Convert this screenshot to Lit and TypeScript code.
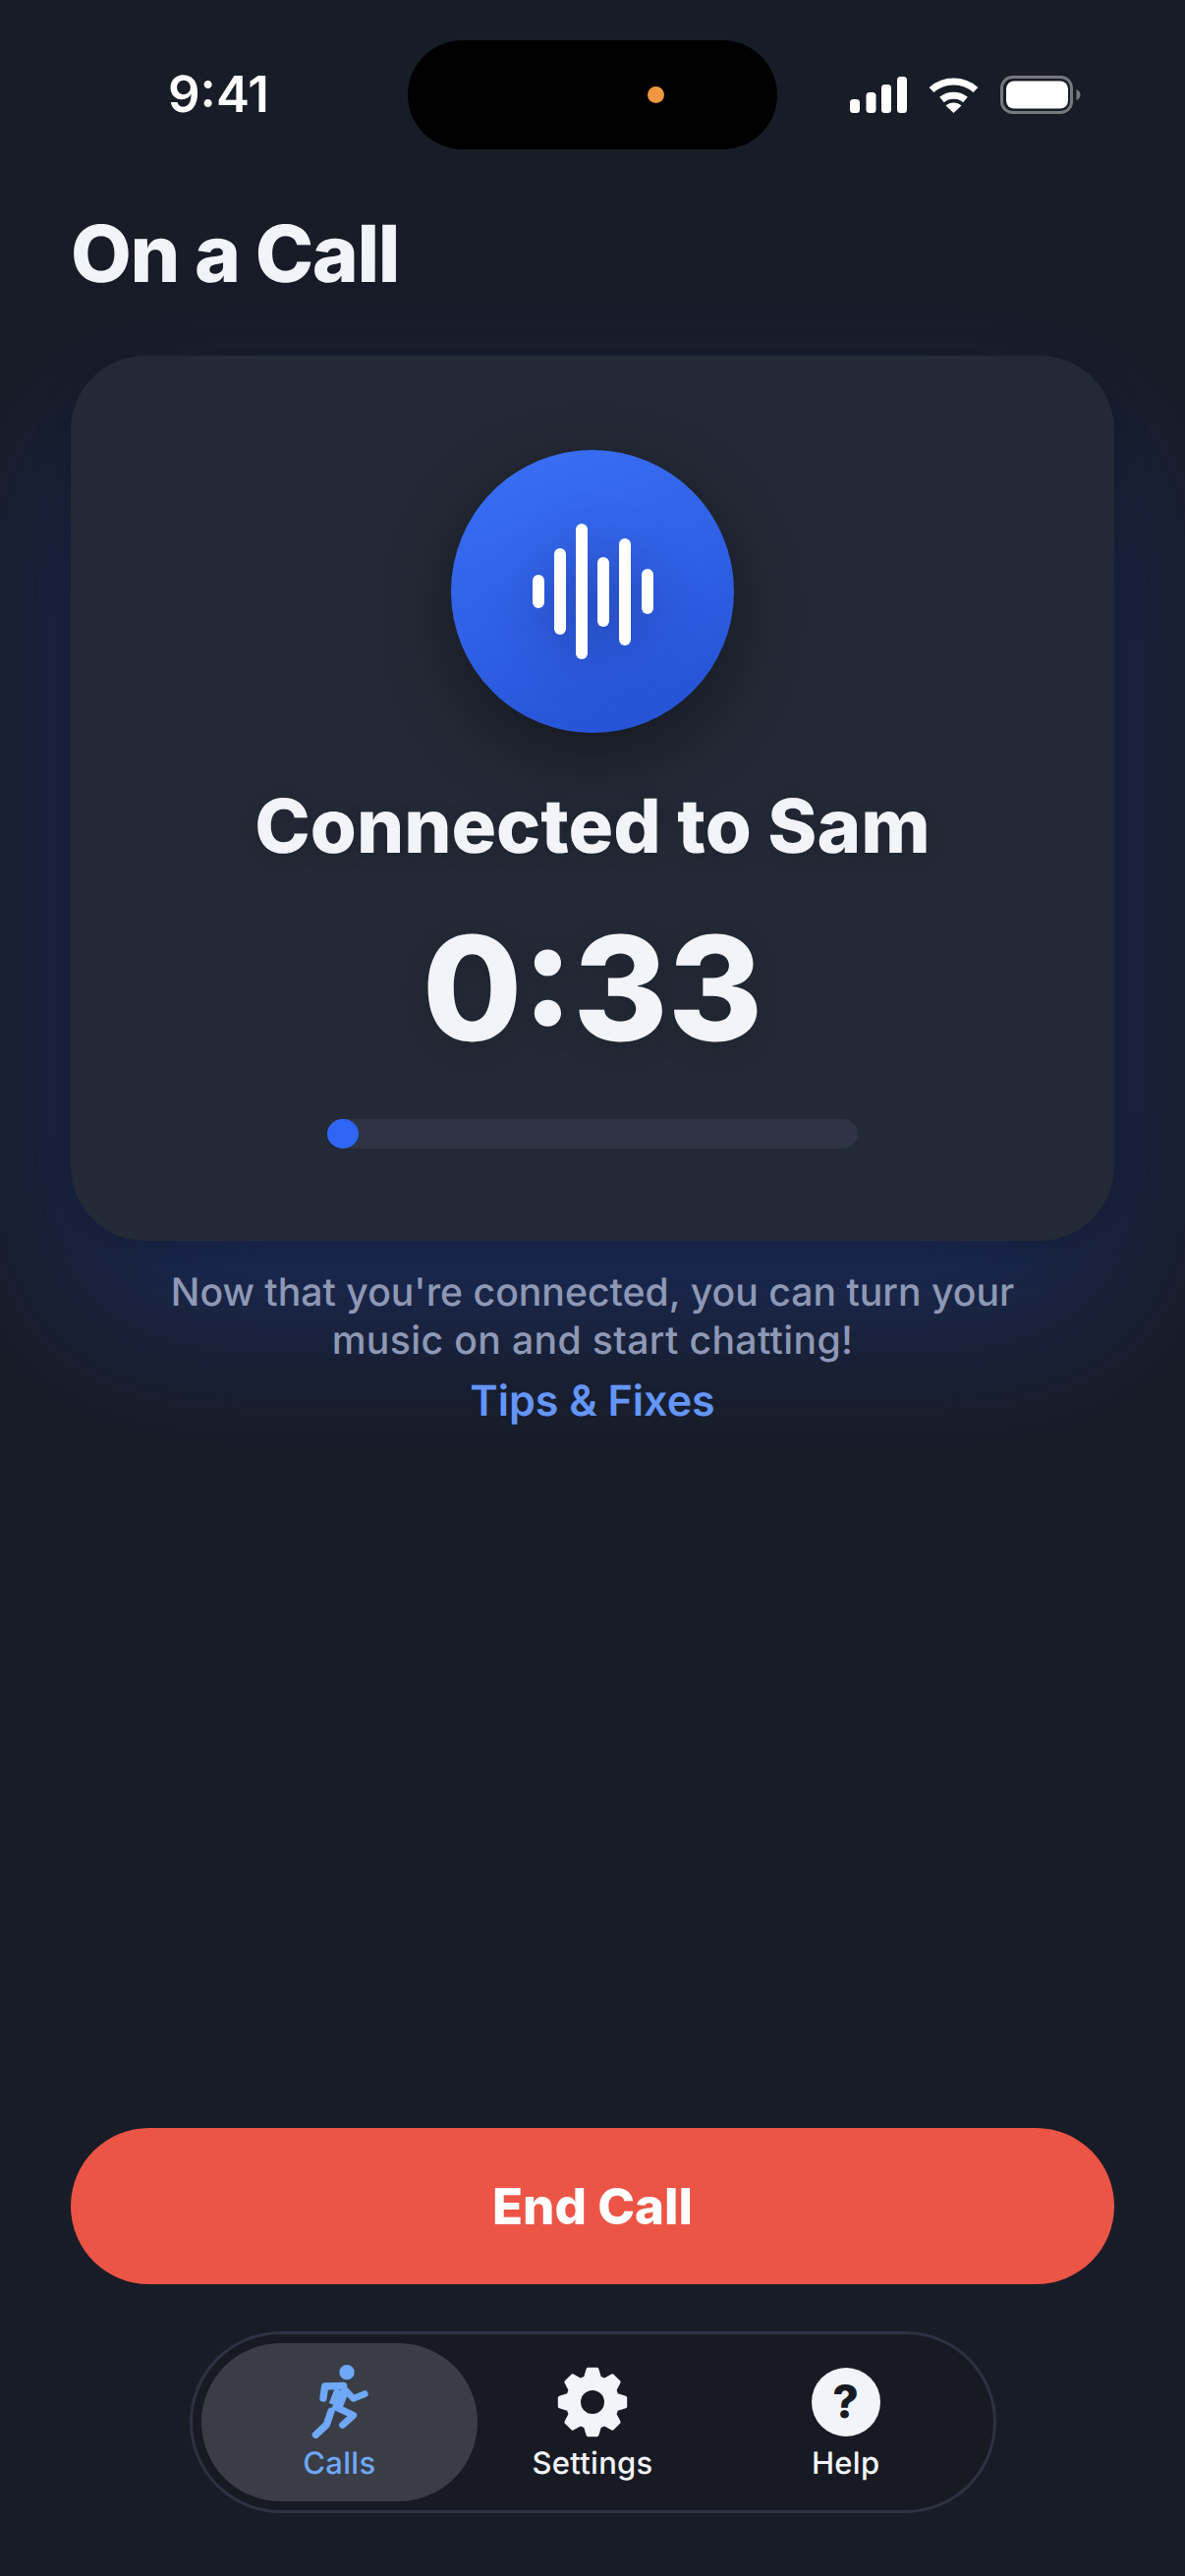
import { LitElement, html, css, svg } from 'lit';
import { customElement, state } from 'lit/decorators.js';

// 8-tooth gear, centered on 0,0
function gearPath(teeth: number, outer: number, inner: number, hole: number) {
  const pts: string[] = [];
  const step = (Math.PI * 2) / teeth;
  for (let i = 0; i < teeth; i++) {
    const a = i * step - Math.PI / 2;
    const corners: [number, number][] = [
      [a - step * 0.36, inner],
      [a - step * 0.17, outer],
      [a + step * 0.17, outer],
      [a + step * 0.36, inner],
    ];
    for (const [ang, r] of corners) {
      pts.push(`${(Math.cos(ang) * r).toFixed(2)} ${(Math.sin(ang) * r).toFixed(2)}`);
    }
  }
  const ring = `M${pts.join('L')}Z`;
  const circle = `M${hole} 0A${hole} ${hole} 0 1 0 ${-hole} 0A${hole} ${hole} 0 1 0 ${hole} 0Z`;
  return ring + circle;
}

const BARS = [
  { x: 542, top: 585, bottom: 619 },
  { x: 564, top: 558, bottom: 646 },
  { x: 586, top: 533, bottom: 671 },
  { x: 608, top: 567, bottom: 638 },
  { x: 630, top: 548, bottom: 657 },
  { x: 653, top: 579, bottom: 625 },
];

@customElement('app-root')
export class AppRoot extends LitElement {
  @state()
  tab = 'calls';

  renderSignal() {
    return html`<svg class="signal" width="58" height="37" viewBox="0 0 58 37">
      <rect x="0" y="23" width="10" height="14" rx="3.5" fill="#fff"></rect>
      <rect x="16.5" y="16" width="10" height="21" rx="3.5" fill="#fff"></rect>
      <rect x="32" y="8" width="10" height="29" rx="3.5" fill="#fff"></rect>
      <rect x="48" y="0" width="10" height="37" rx="3.5" fill="#fff"></rect>
    </svg>`;
  }

  renderWifi() {
    return html`<svg class="wifi" width="51" height="37" viewBox="0 0 51 37">
      <path d="M3 13.5C15.5 2 35.5 2 48 13.5" fill="none" stroke="#fff" stroke-width="7"></path>
      <path d="M13.5 23.5C20 17.8 31 17.8 37.5 23.5" fill="none" stroke="#fff" stroke-width="7"></path>
      <path d="M17.5 29.5C22 25.6 29 25.6 33.5 29.5L25.5 37Z" fill="#fff"></path>
    </svg>`;
  }

  renderBattery() {
    return html`<svg class="battery" width="82" height="39" viewBox="0 0 82 39">
      <rect x="1.5" y="1.5" width="71" height="36" rx="11" fill="none" stroke="#77787d" stroke-width="3"></rect>
      <rect x="6" y="5.5" width="63" height="28" rx="8" fill="#fff"></rect>
      <path d="M77.5 14C80 15 81.5 17 81.5 19.5C81.5 22 80 24 77.5 25Z" fill="#77787d"></path>
    </svg>`;
  }

  renderWave() {
    return html`<svg class="wave" width="123" height="138" viewBox="542 533 123 138">
      ${BARS.map(
        (b) => svg`<rect x=${b.x} y=${b.top} width="12" height=${b.bottom - b.top} rx="6" fill="#fff"></rect>`,
      )}
    </svg>`;
  }

  renderRunner() {
    return html`<svg class="icon runner" width="60" height="78" viewBox="410 140 180 234">
      <circle cx="518" cy="166" r="23" fill="#6fa8f7"></circle>
      <g fill="none" stroke="#6fa8f7" stroke-linecap="round" stroke-linejoin="round">
        <path d="M446 245L451 209L508 207" stroke-width="22"></path>
        <path d="M508 215L538 246L573 232" stroke-width="20"></path>
        <path d="M502 222L484 268" stroke-width="44" stroke-linecap="butt"></path>
        <path d="M484 272L538 297L505 327" stroke-width="21"></path>
        <path d="M470 285L456 326L423 357" stroke-width="22"></path>
      </g>
    </svg>`;
  }

  renderGear() {
    return html`<svg class="icon" width="78" height="78" viewBox="-39 -39 78 78">
      <path d=${gearPath(8, 33.5, 25.5, 12)} fill="#f2f4f9" fill-rule="evenodd"
        stroke="#f2f4f9" stroke-width="4" stroke-linejoin="round"></path>
      <circle r="12" fill="#171a23"></circle>
    </svg>`;
  }

  render() {
    return html`
      <div class="status">
        <span class="clock">9:41</span>
        <div class="island"><span class="dot"></span></div>
        <div class="indicators">
          ${this.renderSignal()} ${this.renderWifi()} ${this.renderBattery()}
        </div>
      </div>

      <main>
        <h1>On a Call</h1>

        <section class="card">
          <div class="avatar">${this.renderWave()}</div>
          <h2>Connected to Sam</h2>
          <div class="timer">0:33</div>
          <div class="track"><div class="fill"></div></div>
        </section>

        <p class="note">
          Now that you're connected, you can turn your<br />
          <span class="second">music on and start chatting!</span>
        </p>
        <a class="link">Tips &amp; Fixes</a>

        <div class="spacer"></div>

        <button class="end">End Call</button>
      </main>

      <nav>
        <div class="item active">${this.renderRunner()}<span>Calls</span></div>
        <div class="item">${this.renderGear()}<span>Settings</span></div>
        <div class="item">
          <div class="help"><span>?</span></div>
          <span>Help</span>
        </div>
      </nav>
    `;
  }

  static styles = css`
    :host {
      display: flex;
      flex-direction: column;
      width: 1206px;
      height: 2622px;
      overflow: hidden;
      background: #181c27;
      font-family: Inter, 'Liberation Sans', sans-serif;
      text-rendering: geometricPrecision;
      color: #f2f4f9;
    }

    .status {
      display: grid;
      grid-template-columns: 415px 376px 1fr;
      align-items: center;
      height: 111px;
      margin-top: 41px;
    }

    .clock {
      justify-self: start;
      margin-left: 171px;
      font-size: 51px;
      font-weight: 600;
      line-height: 60px;
      color: #fff;
    }

    .island {
      display: flex;
      align-items: center;
      justify-content: flex-end;
      height: 111px;
      padding-right: 115px;
      box-sizing: border-box;
      border-radius: 56px;
      background: #000;
    }

    .dot {
      width: 17px;
      height: 17px;
      border-radius: 50%;
      background: #f0983f;
    }

    .indicators {
      display: flex;
      align-items: center;
      margin-left: 74px;
    }

    .signal {
      margin-right: 22px;
    }

    .wifi {
      margin-right: 22px;
    }

    main {
      flex: 1;
      display: flex;
      flex-direction: column;
      padding: 0 72px;
      min-height: 0;
    }

    h1 {
      margin: 59px 0 0;
      font-size: 80px;
      line-height: 96px;
      font-weight: 800;
      letter-spacing: -1.4px;
    }

    .card {
      display: flex;
      flex-direction: column;
      align-items: center;
      height: 901px;
      margin-top: 55px;
      box-sizing: border-box;
      padding-top: 96px;
      border-radius: 76px;
      background: #232936;
      box-shadow: 0 10px 36px rgba(0, 0, 0, 0.22), 0 80px 170px rgba(38, 90, 235, 0.27);
    }

    .avatar {
      display: flex;
      align-items: center;
      justify-content: center;
      width: 288px;
      height: 288px;
      border-radius: 50%;
      background: linear-gradient(160deg, #3a70f8 0%, #2450d2 100%);
      box-shadow: 0 24px 70px rgba(0, 0, 0, 0.4);
    }

    .wave {
      filter: drop-shadow(0 10px 24px rgba(20, 30, 90, 0.4));
    }

    h2 {
      margin: 52px 0 0;
      font-size: 76px;
      line-height: 86px;
      font-weight: 800;
      text-shadow: 0 4px 20px rgba(0, 0, 0, 0.15);
    }

    .timer {
      margin-top: 38px;
      font-size: 147px;
      line-height: 170px;
      font-weight: 800;
      text-shadow: 0 6px 30px rgba(0, 0, 0, 0.15);
    }

    .track {
      width: 540px;
      height: 30px;
      margin-top: 47px;
      border-radius: 15px;
      background: #2e3444;
    }

    .fill {
      width: 32px;
      height: 30px;
      border-radius: 50%;
      background: #2f66f5;
    }

    .note {
      margin: 28px 0 0;
      font-size: 39.2px;
      line-height: 49px;
      font-weight: 450;
      text-align: center;
      color: #8e98b5;
    }

    .second {
      letter-spacing: 0.35px;
    }

    .link {
      margin-top: 12px;
      font-size: 43px;
      line-height: 50px;
      font-weight: 600;
      text-align: center;
      color: #6495f8;
    }

    .spacer {
      flex: 1;
    }

    .end {
      height: 159px;
      padding: 0;
      border: none;
      border-radius: 80px;
      background: #ec5546;
      color: #fff;
      font: 800 51px Inter, 'Liberation Sans', sans-serif;
    }

    nav {
      display: flex;
      align-items: stretch;
      width: 821px;
      height: 185px;
      margin: 48px auto 64px;
      padding: 9px;
      box-sizing: border-box;
      border: 3px solid #2d3242;
      border-radius: 93px;
      background: #171a23;
    }

    .item {
      flex: 1;
      display: flex;
      flex-direction: column;
      align-items: center;
      border-radius: 81px;
      padding-top: 21px;
      font-size: 31px;
      line-height: 36px;
      font-weight: 450;
      letter-spacing: 0.3px;
      color: #f2f4f9;
    }

    .item + .item {
      margin-left: -24px;
    }

    .item span {
      margin-top: 6px;
    }

    .active {
      background: #3a3d46;
      color: #6fa8f7;
    }

    .runner {
      margin-left: 3px;
    }

    .help {
      display: flex;
      align-items: center;
      justify-content: center;
      width: 70px;
      height: 70px;
      margin: 4px 0;
      border-radius: 50%;
      background: #f2f4f9;
      color: #171a23;
      font-size: 46px;
      font-weight: 800;
      line-height: 70px;
    }

    .help span {
      margin: 0;
    }
  `;
}

declare global {
  interface HTMLElementTagNameMap {
    'app-root': AppRoot;
  }
}
